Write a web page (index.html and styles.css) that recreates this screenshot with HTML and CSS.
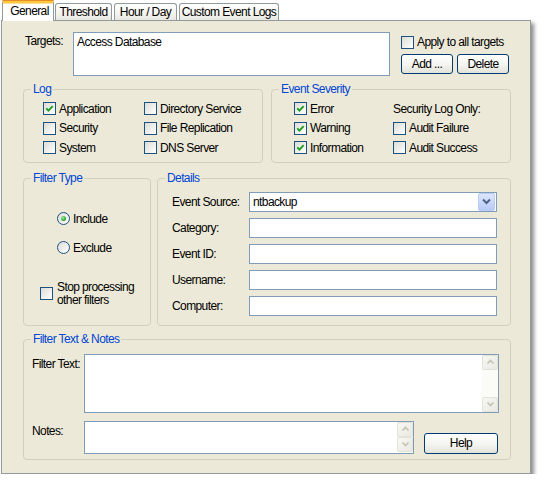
FILE: index.html
```html
<!DOCTYPE html>
<html>
<head>
    <link rel="stylesheet" href="styles.css">
</head>
<body>
<div class="window">
    <div class="tabs">
        <div class="tab active">General</div>
        <div class="tab">Threshold</div>
        <div class="tab">Hour / Day</div>
        <div class="tab">Custom Event Logs</div>
    </div>

    <div class="panel">
        <div class="targets">
            <span class="targets-label">Targets:</span>
            <div class="textbox targets-box">Access Database</div>
            <div class="targets-side">
                <label class="check"><span class="box"></span>Apply to all targets</label>
                <div class="btn-row">
                    <button class="btn">Add ...</button>
                    <button class="btn">Delete</button>
                </div>
            </div>
        </div>

        <div class="row row-top">
            <fieldset class="group log">
                <legend>Log</legend>
                <div class="checks">
                    <label class="check"><span class="box checked"><svg viewBox="0 0 11 11"><path d="M2.3 5.4 L4.4 7.6 L8.7 3.1"/></svg></span>Application</label>
                    <label class="check"><span class="box"></span>Directory Service</label>
                    <label class="check"><span class="box"></span>Security</label>
                    <label class="check"><span class="box"></span>File Replication</label>
                    <label class="check"><span class="box"></span>System</label>
                    <label class="check"><span class="box"></span>DNS Server</label>
                </div>
            </fieldset>
            <fieldset class="group severity">
                <legend>Event Severity</legend>
                <div class="checks">
                    <label class="check"><span class="box checked"><svg viewBox="0 0 11 11"><path d="M2.3 5.4 L4.4 7.6 L8.7 3.1"/></svg></span>Error</label>
                    <span class="note">Security Log Only:</span>
                    <label class="check"><span class="box checked"><svg viewBox="0 0 11 11"><path d="M2.3 5.4 L4.4 7.6 L8.7 3.1"/></svg></span>Warning</label>
                    <label class="check"><span class="box"></span>Audit Failure</label>
                    <label class="check"><span class="box checked"><svg viewBox="0 0 11 11"><path d="M2.3 5.4 L4.4 7.6 L8.7 3.1"/></svg></span>Information</label>
                    <label class="check"><span class="box"></span>Audit Success</label>
                </div>
            </fieldset>
        </div>

        <div class="row row-mid">
            <fieldset class="group filter-type">
                <legend>Filter Type</legend>
                <label class="radio include"><span class="dot checked"></span>Include</label>
                <label class="radio exclude"><span class="dot"></span>Exclude</label>
                <label class="check stop"><span class="box"></span><span>Stop processing<br>other filters</span></label>
            </fieldset>
            <fieldset class="group details">
                <legend>Details</legend>
                <div class="fields">
                    <span class="field-label">Event Source:</span>
                    <div class="textbox combo">
                        <span class="combo-text">ntbackup</span>
                        <span class="combo-btn"><svg viewBox="0 0 9 7"><path d="M1 1.5 L4.5 5 L8 1.5"/></svg></span>
                    </div>
                    <span class="field-label">Category:</span>
                    <div class="textbox field"></div>
                    <span class="field-label">Event ID:</span>
                    <div class="textbox field"></div>
                    <span class="field-label">Username:</span>
                    <div class="textbox field"></div>
                    <span class="field-label">Computer:</span>
                    <div class="textbox field"></div>
                </div>
            </fieldset>
        </div>

        <fieldset class="group notes">
            <legend>Filter Text &amp; Notes</legend>
            <div class="notes-grid">
                <span class="field-label top">Filter Text:</span>
                <div class="memo filter-memo">
                    <div class="memo-text"></div>
                    <div class="vscroll">
                        <span class="sbtn"><svg viewBox="0 0 9 6"><path d="M1.5 4.5 L4.5 1.5 L7.5 4.5"/></svg></span>
                        <span class="track"></span>
                        <span class="sbtn"><svg viewBox="0 0 9 6"><path d="M1.5 1.5 L4.5 4.5 L7.5 1.5"/></svg></span>
                    </div>
                </div>
                <span class="field-label top">Notes:</span>
                <div class="notes-row">
                    <div class="memo notes-memo">
                        <div class="memo-text"></div>
                        <div class="vscroll">
                            <span class="sbtn"><svg viewBox="0 0 9 6"><path d="M1.5 4.5 L4.5 1.5 L7.5 4.5"/></svg></span>
                            <span class="sbtn"><svg viewBox="0 0 9 6"><path d="M1.5 1.5 L4.5 4.5 L7.5 1.5"/></svg></span>
                        </div>
                    </div>
                    <button class="btn help">Help</button>
                </div>
            </div>
        </fieldset>
    </div>
</div>
</body>
</html>
```

FILE: styles.css
```css
body {
    margin: 0;
    background: #fff;
    font-family: "Liberation Sans", Arial, sans-serif;
    font-size: 12px;
    letter-spacing: -0.6px;
    color: #000;
}

.window {
    padding-left: 1px;
    width: 530px;
}

/* tab strip */
.tabs {
    display: flex;
    align-items: flex-end;
    gap: 2px;
    height: 20px;
    padding-left: 1px;
    position: relative;
    z-index: 1;
}

.tab {
    height: 17px;
    line-height: 17px;
    box-sizing: border-box;
    border: 1px solid #919b9c;
    border-bottom: none;
    border-radius: 3px 3px 0 0;
    background: linear-gradient(#fff, #f4f3ee 60%, #e8e7e0);
    text-align: center;
}

.tab:nth-child(1) { width: 52px; }
.tab:nth-child(2) { width: 57px; margin-left: -1px; }
.tab:nth-child(3) { width: 63px; }
.tab:nth-child(4) { width: 100px; }

.tab.active {
    height: 21px;
    line-height: 17px;
    margin-bottom: -1px;
    padding-left: 3px;
    background: #fff;
    border-top: 3px solid #ffc83c;
    box-shadow: inset 0 1px 0 #ffe29a;
    border-radius: 3px 3px 0 0;
    position: relative;
}

.tab.active::before {
    content: "";
    position: absolute;
    left: -1px;
    right: -1px;
    top: -3px;
    height: 1px;
    background: #e68b2c;
    border-radius: 2px 2px 0 0;
}

/* page */
.panel {
    box-sizing: border-box;
    width: 530px;
    height: 454px;
    border: 1px solid #919b9c;
    background: #ece9d8;
    padding: 11px 19px 0 21px;
    box-shadow: 3px 3px 4px rgba(0, 0, 0, 0.45);
}

.textbox {
    box-sizing: border-box;
    border: 1px solid #7f9db9;
    background: #fff;
}

.targets {
    display: flex;
    height: 44px;
}

.targets-label {
    width: 48px;
    margin-left: 2px;
    padding-top: 2px;
    line-height: 14px;
}

.targets-box {
    width: 317px;
    height: 44px;
    padding: 2px 3px;
    line-height: 14px;
}

.targets-side {
    margin-left: 11px;
    padding-top: 3px;
}

.btn-row {
    display: flex;
    gap: 4px;
    margin-top: 5px;
}

.btn {
    box-sizing: border-box;
    width: 52px;
    height: 20px;
    padding: 0;
    border: 1px solid #003c74;
    border-radius: 3px;
    background: linear-gradient(#fff, #f4f4f0 55%, #e3e2da);
    font: inherit;
    letter-spacing: inherit;
    color: #000;
}

/* checkboxes and radios */
.check, .radio {
    display: flex;
    align-items: center;
    gap: 3px;
    height: 14px;
    line-height: 14px;
    white-space: nowrap;
}

.box {
    box-sizing: border-box;
    width: 13px;
    height: 13px;
    flex: none;
    border: 1px solid #1c5180;
    background: linear-gradient(135deg, #dcdcd7, #fff);
}

.box svg {
    display: block;
    width: 11px;
    height: 11px;
    fill: none;
    stroke: #21a121;
    stroke-width: 2;
}

.dot {
    box-sizing: border-box;
    width: 13px;
    height: 13px;
    flex: none;
    border: 1px solid #1c5180;
    border-radius: 50%;
    background: linear-gradient(135deg, #dcdcd7, #fff);
    display: flex;
    align-items: center;
    justify-content: center;
}

.dot.checked::after {
    content: "";
    width: 5px;
    height: 5px;
    border-radius: 50%;
    background: radial-gradient(circle at 35% 35%, #a6e8a4, #21a121 70%);
}

/* group boxes */
.row {
    display: grid;
    column-gap: 8px;
}

.row-top {
    grid-template-columns: 240px 1fr;
    margin-top: 6px;
}

.row-mid {
    grid-template-columns: 128px 1fr;
    column-gap: 6px;
    margin-top: 8px;
}

.group {
    margin: 0;
    min-width: 0;
    padding: 0;
    border: 1px solid #d0d0bf;
    border-radius: 4px;
}

.group legend {
    margin-left: 7px;
    padding: 0 2px;
    line-height: 15px;
    color: #0046d5;
}

.checks {
    display: grid;
    grid-auto-rows: 19.5px;
    align-items: center;
    padding: 2px 0 4px;
}

.log .checks {
    grid-template-columns: 101px 1fr;
    padding-left: 19px;
}

.severity .checks {
    grid-template-columns: 99px 1fr;
    padding-left: 22px;
}

.filter-type {
    display: flex;
    flex-direction: column;
}

.radio {
    margin-left: 33px;
}

.include {
    margin-top: 26px;
}

.exclude {
    margin-top: 15px;
}

.stop {
    margin: 26px 0 0 16px;
    height: 26px;
    gap: 4px;
    line-height: 13px;
}

.details .fields {
    display: grid;
    grid-template-columns: 77px 248px;
    grid-auto-rows: 20px;
    row-gap: 6px;
    align-items: center;
    padding: 6px 0 9px 14px;
}

.field {
    height: 20px;
}

.combo {
    height: 20px;
    display: flex;
    align-items: center;
    padding: 1px;
}

.combo-text {
    flex: 1;
    padding-left: 2px;
}

.combo-btn {
    box-sizing: border-box;
    width: 17px;
    height: 18px;
    border: 1px solid #bacbf4;
    border-radius: 2px;
    background: linear-gradient(#dce6fd, #b7cbf8);
    display: flex;
    align-items: center;
    justify-content: center;
}

.combo-btn svg {
    width: 9px;
    height: 7px;
    fill: none;
    stroke: #4d6185;
    stroke-width: 2;
}

/* notes */
.notes {
    margin-top: 6px;
}

.notes-grid {
    display: grid;
    grid-template-columns: 52px 1fr;
    row-gap: 8px;
    padding: 7px 11px 5px 8px;
}

.field-label.top {
    padding-top: 3px;
    line-height: 14px;
}

.memo {
    box-sizing: border-box;
    border: 1px solid #7f9db9;
    background: #fff;
    display: flex;
}

.filter-memo {
    height: 59px;
}

.notes-row {
    display: flex;
    align-items: flex-end;
    gap: 10px;
}

.notes-memo {
    width: 330px;
    height: 33px;
}

.memo-text {
    flex: 1;
}

.vscroll {
    width: 16px;
    display: flex;
    flex-direction: column;
    background: #fbfbf8;
}

.track {
    flex: 1;
}

.sbtn {
    box-sizing: border-box;
    height: 15px;
    border: 1px solid #e3e2d9;
    border-radius: 2px;
    background: linear-gradient(135deg, #f8f8f4, #e9e8e1);
    display: flex;
    align-items: center;
    justify-content: center;
}

.sbtn svg {
    width: 9px;
    height: 6px;
    fill: none;
    stroke: #c4c2b4;
    stroke-width: 1.6;
}

.help {
    width: 74px;
    height: 21px;
}
```
